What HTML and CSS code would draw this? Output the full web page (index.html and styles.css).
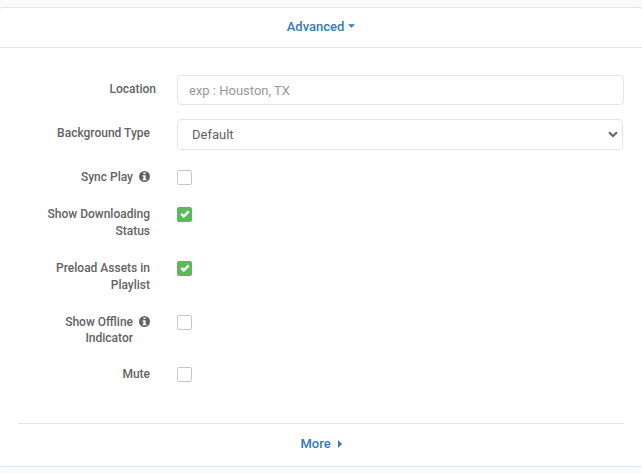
FILE: index.html
```html
<!DOCTYPE html>
<html lang="en">
<head>
<meta charset="utf-8">
<meta name="viewport" content="width=device-width, initial-scale=1">
<title>Advanced</title>
<link rel="stylesheet" href="styles.css">
</head>
<body>
<svg class="sprite" aria-hidden="true">
  <symbol id="info" viewBox="0 0 10 10">
    <circle cx="5" cy="5" r="5" fill="currentColor"/>
    <path d="M4 1.3h2v1.4H4zM3.3 3.8H6v3.4h.8v1.2H3.3V7.2H4V5h-.7z" fill="#fff"/>
  </symbol>
</svg>
<form class="panel">
  <header class="panel-header">
    <a class="toggle" href="#advanced">Advanced
      <svg class="caret-down" viewBox="0 0 8 4" aria-hidden="true"><path d="M0 0h8L4 4z"/></svg>
    </a>
  </header>
  <div class="panel-body" id="advanced">
    <div class="fields">
      <div class="row row-wide">
        <label class="label" for="location">Location</label>
        <input class="control" id="location" type="text" placeholder="exp : Houston, TX">
      </div>
      <div class="row">
        <label class="label" for="background">Background Type</label>
        <div class="select-wrap">
          <select class="control select" id="background"><option>Default</option></select>
          <svg class="chevron" viewBox="0 0 10 7" aria-hidden="true"><path d="M1 1.2l4 4 4-4"/></svg>
        </div>
      </div>
    </div>
    <div class="options">
      <div class="row">
        <label class="label with-icon" for="sync"><span>Sync Play</span><svg class="info"><use href="#info"/></svg></label>
        <input class="check" id="sync" type="checkbox">
      </div>
      <div class="row">
        <label class="label" for="downloading">Show Downloading Status</label>
        <span class="check-wrap"><input class="check" id="downloading" type="checkbox" checked><svg class="tick" viewBox="0 0 10 8" aria-hidden="true"><path d="M1.2 3.8l2.6 2.6 5-5"/></svg></span>
      </div>
      <div class="row">
        <label class="label" for="preload">Preload Assets in Playlist</label>
        <span class="check-wrap"><input class="check" id="preload" type="checkbox" checked><svg class="tick" viewBox="0 0 10 8" aria-hidden="true"><path d="M1.2 3.8l2.6 2.6 5-5"/></svg></span>
      </div>
      <div class="row">
        <label class="label label-tight with-icon" for="offline"><span>Show Offline Indicator</span><svg class="info"><use href="#info"/></svg></label>
        <input class="check" id="offline" type="checkbox">
      </div>
      <div class="row">
        <label class="label" for="mute">Mute</label>
        <input class="check" id="mute" type="checkbox">
      </div>
    </div>
  </div>
  <footer class="panel-footer">
    <a class="toggle" href="#more">More
      <svg class="caret-right" viewBox="0 0 4 8" aria-hidden="true"><path d="M0 0v8l4-4z"/></svg>
    </a>
  </footer>
</form>
</body>
</html>
```
FILE: styles.css
```css
* {
  box-sizing: border-box;
}

body {
  margin: 0;
  padding: 7px 0;
  background: #f9fafc;
  color: #636363;
  font: 500 12px/17px Roboto, sans-serif;
}

.sprite {
  position: absolute;
  width: 0;
  height: 0;
}

.panel {
  background: #fff;
  border: solid #e4e5e7;
  border-width: 1px 0;
  border-radius: 3px;
}

.panel-header {
  display: flex;
  justify-content: center;
  padding: 10px 0 11px;
  border-bottom: 1px solid #e4e5e7;
}

.toggle {
  display: flex;
  align-items: center;
  gap: 4px;
  color: #337ab7;
  font-size: 13px;
  line-height: 18px;
  text-decoration: none;
}

.toggle svg {
  fill: currentColor;
}

.caret-down {
  width: 7px;
  height: 4px;
  margin-bottom: 2px;
}

.caret-right {
  width: 4px;
  height: 8px;
  margin-left: 3px;
}

.panel-body {
  padding: 27px 18px 40px;
}

.fields {
  display: grid;
  gap: 14px;
  margin-bottom: 19px;
}

.options {
  display: grid;
  gap: 20px;
}

.row {
  display: grid;
  grid-template-columns: 132px 1fr;
  column-gap: 27px;
  align-items: start;
}

.row-wide {
  grid-template-columns: 138px 1fr;
  column-gap: 21px;
}

.label {
  padding-left: 20px;
  text-align: right;
}

.label-tight {
  line-height: 16px;
}

.fields .label {
  padding-top: 6px;
}

.with-icon {
  display: flex;
  justify-content: flex-end;
  gap: 6px;
}

.info {
  flex: none;
  width: 11px;
  height: 11px;
  margin-top: 2px;
}

.control {
  width: 100%;
  height: 30px;
  padding: 0 11px;
  border: 1px solid #e4e5e7;
  border-radius: 4px;
  background: #fff;
  color: #636363;
  font: 400 13px/18px Roboto, sans-serif;
}

.control::placeholder {
  color: #999;
  opacity: 1;
}

.select-wrap {
  position: relative;
  margin-right: 1px;
}

.select {
  display: block;
  height: 31px;
  padding-left: 14px;
  appearance: none;
}

.chevron {
  position: absolute;
  top: 12px;
  right: 5px;
  width: 10px;
  height: 7px;
  fill: none;
  stroke: #606266;
  stroke-width: 2;
  pointer-events: none;
}

.check-wrap {
  position: relative;
  width: 15px;
}

.check {
  display: block;
  width: 15px;
  height: 15px;
  margin: 0;
  border: 1px solid #c8c8c8;
  border-radius: 2px;
  background: #fff;
  appearance: none;
}

.options .check {
  margin-top: 1px;
}

.check:checked {
  border-color: #5cb85c;
  background: #5cb85c;
}

.tick {
  position: absolute;
  top: 4px;
  left: 3px;
  width: 10px;
  height: 8px;
  fill: none;
  stroke: #fff;
  stroke-width: 2.4;
  pointer-events: none;
}

.panel-footer {
  display: flex;
  justify-content: center;
  margin: 0 18px;
  padding: 11px 0 13px;
  border-top: 1px solid #e4e5e7;
}
```
